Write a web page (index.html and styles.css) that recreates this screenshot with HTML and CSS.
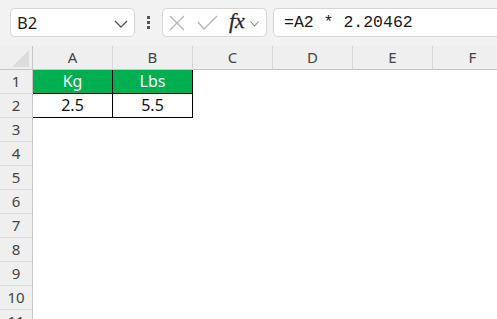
FILE: index.html
```html
<!DOCTYPE html>
<html>
<head>
<meta charset="utf-8">
<link rel="stylesheet" href="styles.css">
</head>
<body>
<div class="toolbar">
  <div class="namebox">
    <span class="name">B2</span>
    <svg class="chev" width="14" height="8" viewBox="0 0 14 8"><path d="M1 1 L7 7 L13 1" fill="none" stroke="#555" stroke-width="1.3"/></svg>
  </div>
  <div class="dots"><span></span><span></span><span></span></div>
  <div class="fxbox">
    <svg class="ic" width="16" height="16" viewBox="0 0 16 16"><path d="M1 1 L15 15 M15 1 L1 15" stroke="#b4b4b4" stroke-width="1.2" fill="none"/></svg>
    <svg class="ic check" width="21" height="15" viewBox="0 0 21 15"><path d="M1 7 L7 14 L20 1" stroke="#b4b4b4" stroke-width="1.2" fill="none"/></svg>
    <span class="fx">fx</span>
    <svg class="chev2" width="9" height="6" viewBox="0 0 9 6"><path d="M0.5 0.5 L4.5 5 L8.5 0.5" fill="none" stroke="#888" stroke-width="1.1"/></svg>
  </div>
  <div class="formula">=A2 * 2.20462</div>
</div>
<div class="sheet">
  <div class="corner"><svg width="17" height="17" viewBox="0 0 17 17"><path d="M17 0 L17 17 L0 17 Z" fill="#dcdcdc"/></svg></div>
  <div class="ch">A</div><div class="ch">B</div><div class="ch">C</div><div class="ch">D</div><div class="ch">E</div><div class="ch">F</div>

  <div class="rh">1</div><div class="c hd b">Kg</div><div class="c hd b">Lbs</div><div class="c"></div><div class="c"></div><div class="c"></div><div class="c"></div>
  <div class="rh">2</div><div class="c b">2.5</div><div class="c b">5.5</div><div class="c"></div><div class="c"></div><div class="c"></div><div class="c"></div>
  <div class="rh">3</div><div class="c"></div><div class="c"></div><div class="c"></div><div class="c"></div><div class="c"></div><div class="c"></div>
  <div class="rh">4</div><div class="c"></div><div class="c"></div><div class="c"></div><div class="c"></div><div class="c"></div><div class="c"></div>
  <div class="rh">5</div><div class="c"></div><div class="c"></div><div class="c"></div><div class="c"></div><div class="c"></div><div class="c"></div>
  <div class="rh">6</div><div class="c"></div><div class="c"></div><div class="c"></div><div class="c"></div><div class="c"></div><div class="c"></div>
  <div class="rh">7</div><div class="c"></div><div class="c"></div><div class="c"></div><div class="c"></div><div class="c"></div><div class="c"></div>
  <div class="rh">8</div><div class="c"></div><div class="c"></div><div class="c"></div><div class="c"></div><div class="c"></div><div class="c"></div>
  <div class="rh">9</div><div class="c"></div><div class="c"></div><div class="c"></div><div class="c"></div><div class="c"></div><div class="c"></div>
  <div class="rh">10</div><div class="c"></div><div class="c"></div><div class="c"></div><div class="c"></div><div class="c"></div><div class="c"></div>
  <div class="rh">11</div><div class="c"></div><div class="c"></div><div class="c"></div><div class="c"></div><div class="c"></div><div class="c"></div>
</div>
</body>
</html>
```

FILE: styles.css
```css
html, body {
  margin: 0;
  padding: 0;
  background: #fff;
  overflow: hidden;
  width: 497px;
  height: 319px;
}
body {
  font-family: "Noto Sans", "Open Sans", sans-serif;
  color: #222;
}
.toolbar {
  height: 46px;
  box-sizing: border-box;
  background: #f2f2f2;
  display: flex;
  align-items: flex-start;
  padding: 8px 0 0 10px;
  white-space: nowrap;
}
.namebox {
  width: 125px;
  height: 29px;
  box-sizing: border-box;
  background: #fff;
  border: 1px solid #d6d6d6;
  border-radius: 5px;
  display: flex;
  align-items: center;
  justify-content: space-between;
  padding: 0 6px 0 6px;
}
.name {
  font-size: 16.5px;
  color: #1a1a1a;
}
.chev { margin-top: 2px; }
.dots {
  width: 27px;
  height: 29px;
  display: flex;
  flex-direction: column;
  align-items: center;
  justify-content: center;
  gap: 2px;
}
.dots span {
  width: 3px;
  height: 3px;
  background: #555;
}
.fxbox {
  width: 105px;
  height: 29px;
  box-sizing: border-box;
  background: #fff;
  border: 1px solid #d6d6d6;
  border-radius: 5px;
  display: flex;
  align-items: center;
  padding-left: 6px;
}
.ic { flex: none; }
.check { margin-left: 12px; margin-top: -1px; }
.fx {
  font-family: "Liberation Serif", "DejaVu Serif", serif;
  font-style: italic;
  font-size: 22px;
  color: #2a2a2a;
  margin-left: 11px;
  line-height: 1;
  margin-top: -3px;
  -webkit-text-stroke: 0.3px #2a2a2a;
}
.chev2 { margin-left: 5px; margin-top: 2px; }
.formula {
  margin-left: 6px;
  flex: 1;
  height: 29px;
  box-sizing: border-box;
  background: #fff;
  border: 1px solid #d6d6d6;
  border-right: none;
  border-radius: 5px 0 0 5px;
  font-family: "Liberation Mono", "DejaVu Sans Mono", monospace;
  font-size: 16.5px;
  line-height: 27px;
  padding-left: 10px;
  color: #1a1a1a;
}
.sheet {
  display: grid;
  grid-template-columns: 33px repeat(6, 80px);
  grid-template-rows: repeat(12, 24px);
  background: #fff;
}
.corner {
  background: #efefef;
  border-right: 1px solid #c6c6c6;
  border-bottom: 1px solid #c6c6c6;
  display: flex;
  align-items: flex-end;
  justify-content: flex-end;
  padding: 0 3px 2px 0;
  box-sizing: border-box;
}
.corner svg { display: block; }
.ch {
  background: #efefef;
  border-right: 1px solid #d8d8d8;
  border-bottom: 1px solid #c6c6c6;
  box-sizing: border-box;
  text-align: center;
  font-size: 15px;
  line-height: 23px;
  color: #444;
}
.rh {
  background: #efefef;
  border-right: 1px solid #c6c6c6;
  border-bottom: 1px solid #dcdcdc;
  box-sizing: border-box;
  text-align: center;
  font-size: 15px;
  line-height: 23px;
  color: #444;
}
.c {
  box-sizing: border-box;
  text-align: center;
  font-size: 16px;
  line-height: 23px;
  color: #111;
}
.c.b {
  border-right: 1px solid #000;
  border-bottom: 1px solid #000;
}
.c.hd {
  background: #00b050;
  color: #fff;
}
```
